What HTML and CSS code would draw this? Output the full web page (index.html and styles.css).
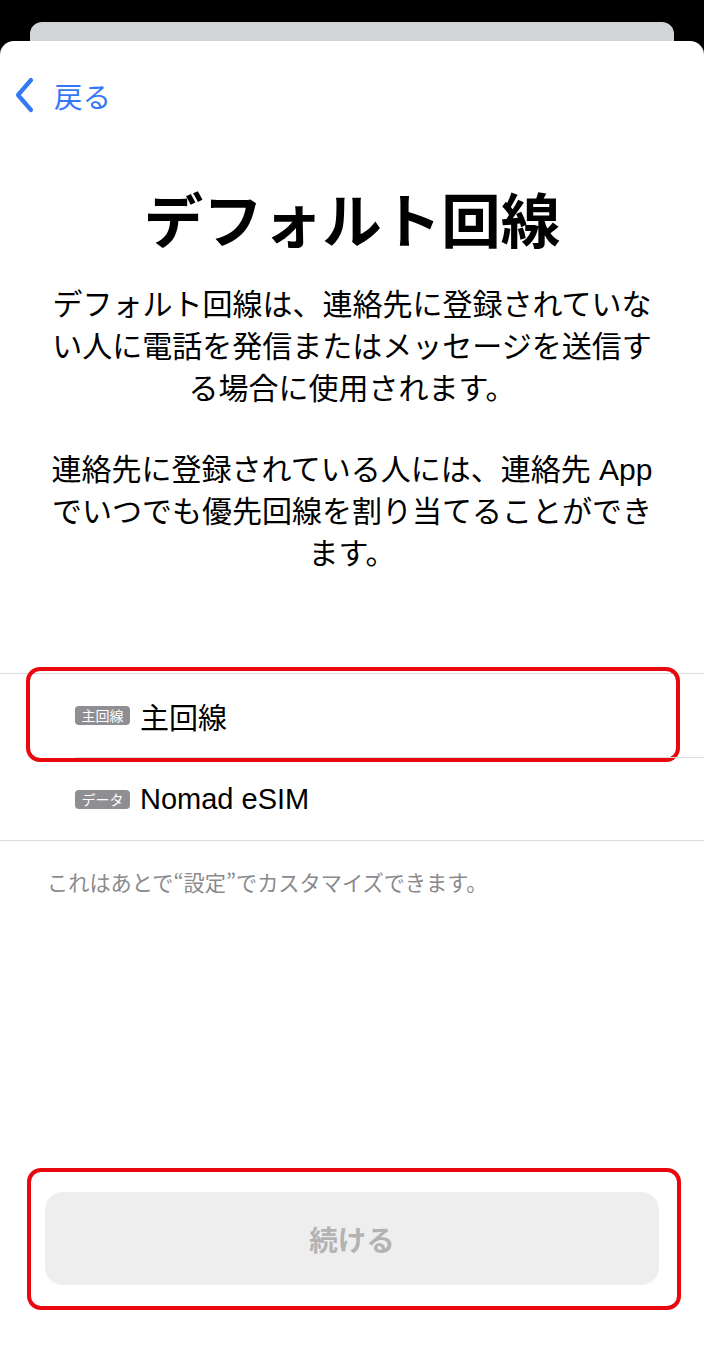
FILE: index.html
```html
<!DOCTYPE html>
<html lang="ja">
	<head>
		<meta charset="utf-8" />
		<title>デフォルト回線</title>
		<link rel="stylesheet" href="styles.css">
	</head>
	<body>
		<div class="cartaFundo"></div>
		<div class="folha">
			<div class="nav">
				<span class="voltar">
					<svg class="chevron" width="22" height="36" viewBox="0 0 22 36">
						<path d="M17 3 L4 18 L17 33" fill="none" stroke="#3478f6" stroke-width="4.2" stroke-linecap="round" stroke-linejoin="round"/>
					</svg>
					<span class="voltarTxt">戻る</span>
				</span>
			</div>
			<h1 class="titulo">デフォルト回線</h1>
			<p class="descr">デフォルト回線は、連絡先に登録されていな<br />い人に電話を発信またはメッセージを送信す<br />る場合に使用されます。</p>
			<p class="descr">連絡先に登録されている人には、連絡先 App<br />でいつでも優先回線を割り当てることができ<br />ます。</p>
			<div class="lista">
				<div class="linha">
					<span class="etiq">主回線</span>
					<span class="nome">主回線</span>
					<div class="destaque"></div>
				</div>
				<div class="linha">
					<span class="etiq">データ</span>
					<span class="nome">Nomad eSIM</span>
				</div>
			</div>
			<p class="nota">これはあとで“設定”でカスタマイズできます。</p>
			<div class="caixaBotao">
				<button class="continuar">続ける</button>
			</div>
		</div>
	</body>
</html>
```

FILE: styles.css
```css
body{margin: 0; background-color: #000; font-family: "Liberation Sans", "Noto Sans CJK JP", sans-serif; color: #000;}
.cartaFundo{margin: 22px 30px 0; height: 19px; background-color: #d3d4d8; border-radius: 12px 12px 0 0;}
.folha{display: flex; flex-direction: column; min-height: 1309px; background-color: #fff; border-radius: 14px 14px 0 0;}
.nav{height: 44px; padding: 32px 0 0 14px; display: flex; align-items: center;}
.voltar{display: flex; align-items: center; gap: 18px; color: #3478f6;}
.chevron{display: block;}
.voltarTxt{font: 28.5px "Noto Sans CJK JP", sans-serif;}
.titulo{margin: 65px 0 0; font: bold 59.5px/70px "Noto Sans CJK JP", sans-serif; text-align: center;}
.descr{margin: 32px 0 0; font: 30px/42px "Liberation Sans", "Noto Sans CJK JP", sans-serif; text-align: center; white-space: nowrap;}
.descr + .descr{margin-top: 39px;}
.lista{margin-top: 98px; border-top: 1px solid #dcdcde; border-bottom: 1px solid #dcdcde;}
.linha{position: relative; display: flex; align-items: center; height: 83px; margin-left: 75px;}
.linha + .linha{border-top: 1px solid #dcdcde; height: 82px;}
.etiq{display: inline-block; width: 55px; height: 19px; border-radius: 4px; background-color: #8e8e93; color: #fff; font: 14px/19px "Noto Sans CJK JP", sans-serif; text-align: center; margin-right: 10px;}
.nome{font: 29px "Liberation Sans", "Noto Sans CJK JP", sans-serif;}
.destaque{position: absolute; top: -7px; bottom: -5px; left: -49px; right: 24px; border: 4px solid #e8090f; border-radius: 14px;}
.nota{margin: 29px 0 0 47px; font: 21.2px/24px "Noto Sans CJK JP", sans-serif; color: #8a8a8e;}
.caixaBotao{margin: auto 23px 40px 27px; padding: 20px 18px 21px 14px; border: 4px solid #e8090f; border-radius: 14px;}
.continuar{display: block; width: 100%; height: 93px; border: 0; border-radius: 18px; background-color: #eeeeef; color: #b3b3b3; font: bold 28.5px "Noto Sans CJK JP", sans-serif;}
```
